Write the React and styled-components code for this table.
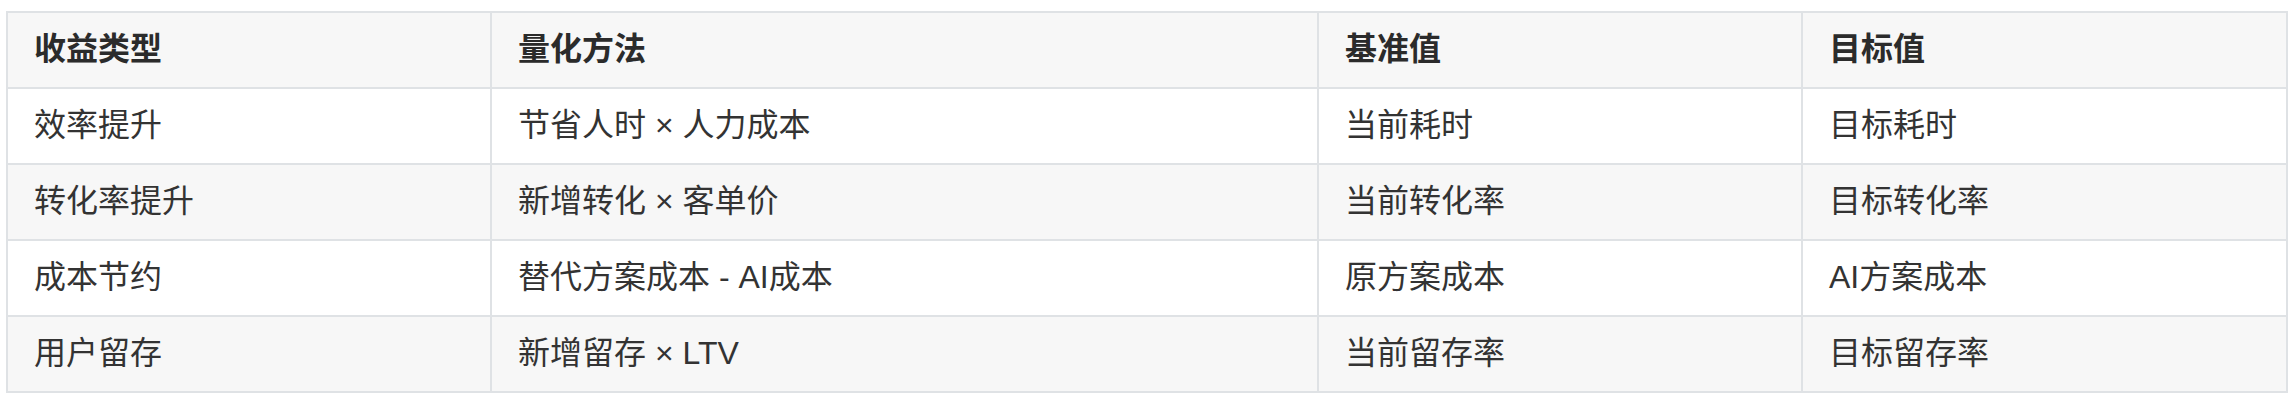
import React from "react";
import styled, { createGlobalStyle } from "styled-components";

const Global = createGlobalStyle`
  html, body { margin: 0; padding: 0; background: #ffffff; }
  body { font-family: "Liberation Sans", "Noto Sans CJK SC", sans-serif; }
`;

const Page = styled.div`
  padding: 11px 8px 6px 6px;
`;

const Table = styled.table`
  border-collapse: collapse;
  table-layout: fixed;
  width: 2280px;
  border: 2px solid #dfe2e5;
  font-size: 32px;
  line-height: 50px;
  color: #333333;
`;

const HeadRow = styled.tr`
  background: #f7f7f7;
`;

const Row = styled.tr`
  background: ${(p) => (p.$shaded ? "#f7f7f7" : "#ffffff")};
`;

const Th = styled.th`
  border: 2px solid #dfe2e5;
  padding: 11px 26px 13px;
  text-align: left;
  font-weight: 700;
  color: #2b2b2b;
`;

const Td = styled.td`
  border: 2px solid #dfe2e5;
  padding: 11px 26px 13px;
  text-align: left;
  font-weight: 400;
  white-space: nowrap;
`;

const head = ["收益类型", "量化方法", "基准值", "目标值"];
const rows = [
  ["效率提升", "节省人时 × 人力成本", "当前耗时", "目标耗时"],
  ["转化率提升", "新增转化 × 客单价", "当前转化率", "目标转化率"],
  ["成本节约", "替代方案成本 - AI成本", "原方案成本", "AI方案成本"],
  ["用户留存", "新增留存 × LTV", "当前留存率", "目标留存率"],
];
const widths = [484, 827, 484, 485];

export default function App() {
  return (
    <>
      <Global />
      <Page>
        <Table>
          <colgroup>
            {widths.map((w, i) => (
              <col key={i} style={{ width: w }} />
            ))}
          </colgroup>
          <thead>
            <HeadRow>
              {head.map((h) => (
                <Th key={h}>{h}</Th>
              ))}
            </HeadRow>
          </thead>
          <tbody>
            {rows.map((r, i) => (
              <Row key={i} $shaded={i % 2 === 1}>
                {r.map((c, j) => (
                  <Td key={j}>{c}</Td>
                ))}
              </Row>
            ))}
          </tbody>
        </Table>
      </Page>
    </>
  );
}
